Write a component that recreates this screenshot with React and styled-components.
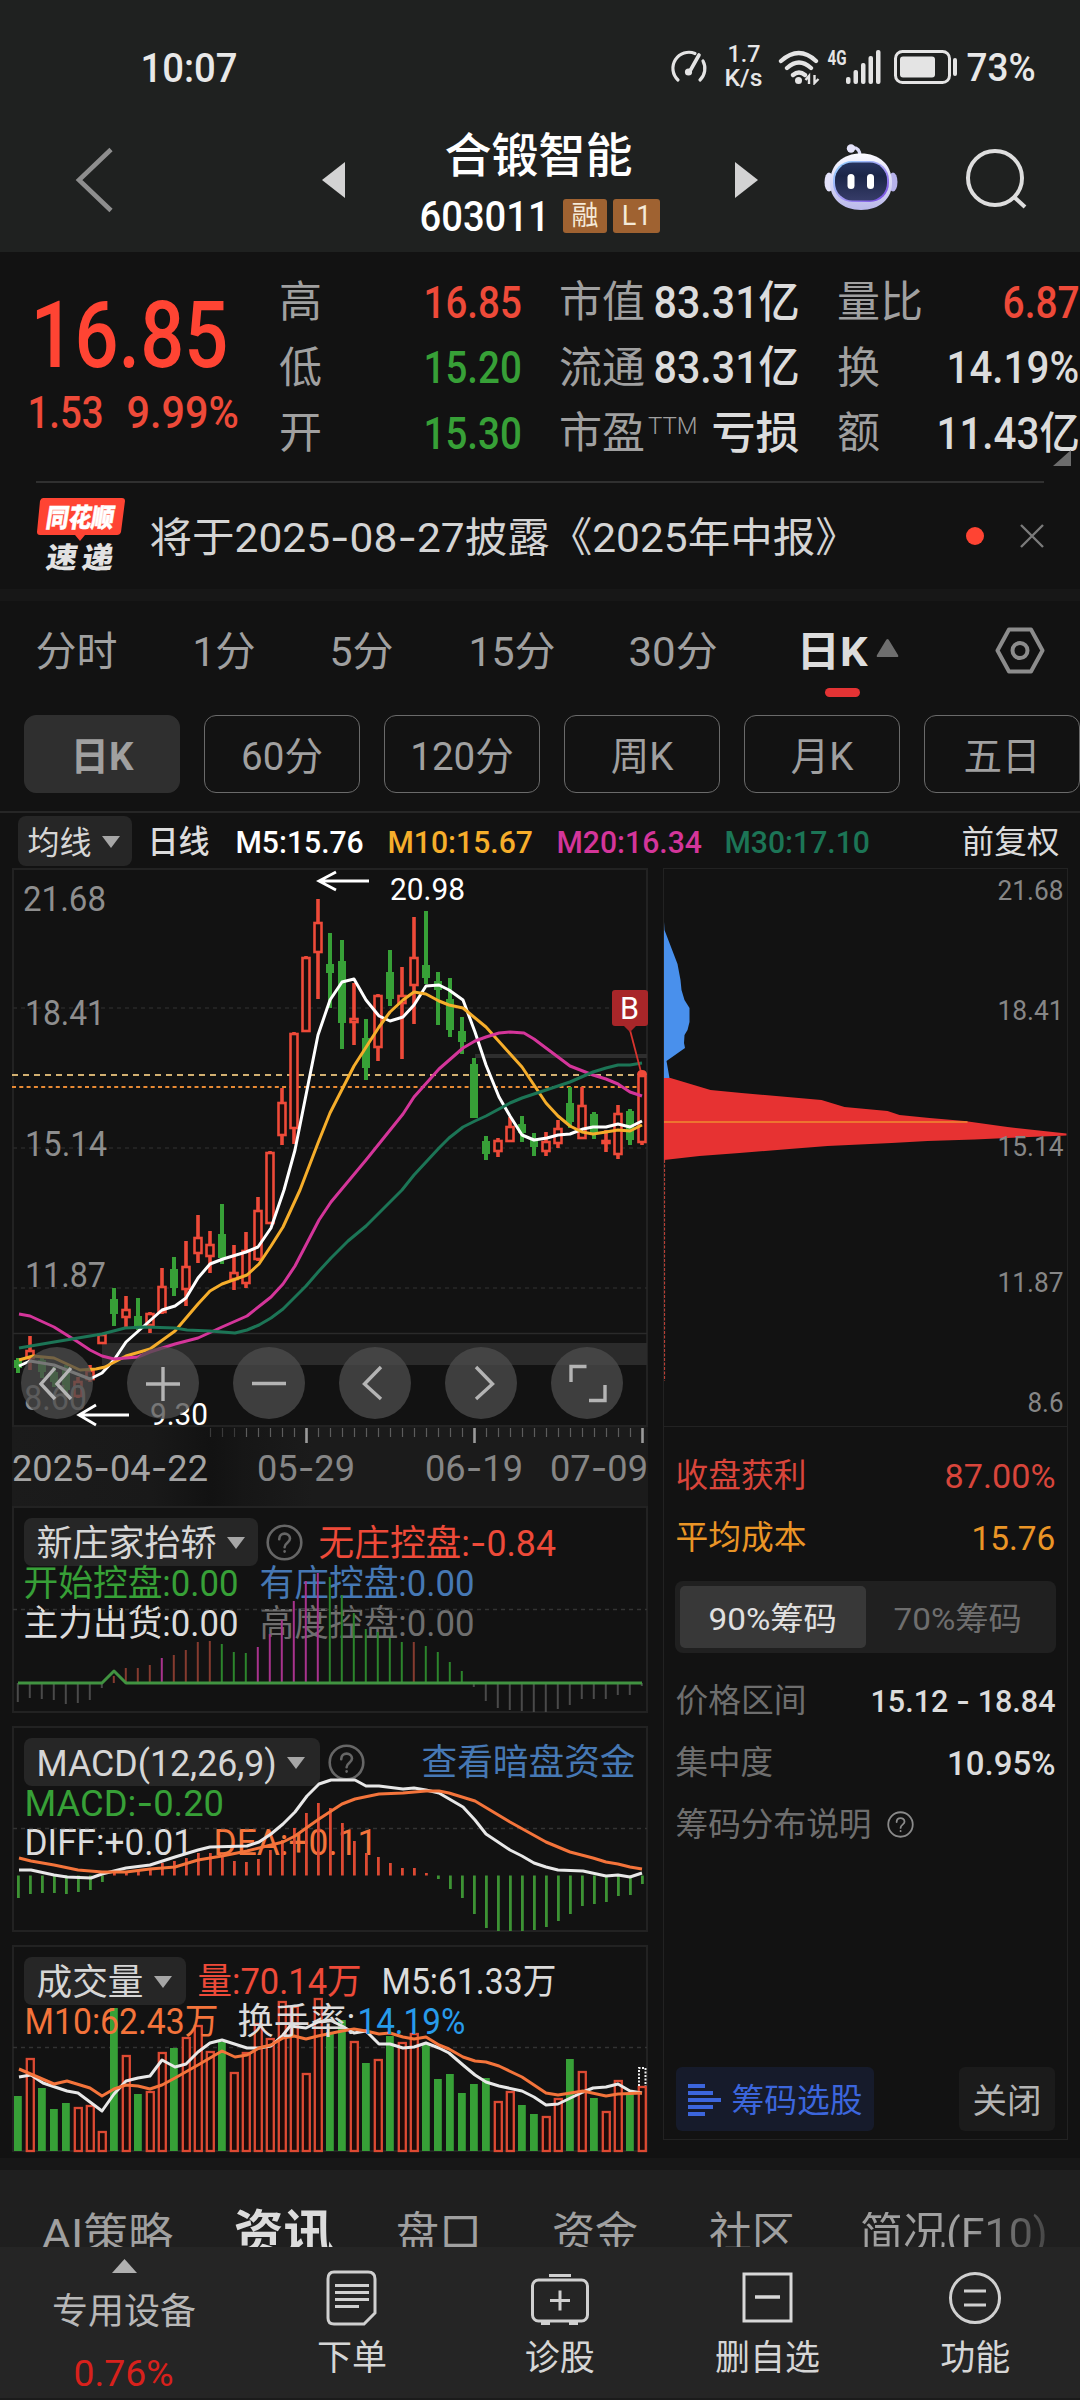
import React, { useLayoutEffect, useRef, useState } from "react";
import styled, { createGlobalStyle, css } from "styled-components";

const sans = `Roboto, "Noto Sans CJK SC", sans-serif`;
const c = {
  red: "#ee4a39", green: "#37a037", white: "#dcdcdc", grey: "#a0a0a0", dim: "#6e6e6e",
  orange: "#f4743b", amber: "#f6ae2b", pink: "#d4359a", teal: "#1c7556", blue: "#4678b4",
};

const Global = createGlobalStyle`
  * { box-sizing: border-box; }
  body { margin: 0; background: #121212; font-family: ${sans}; line-height: 1; color: ${c.white}; }
  svg { display: block; flex: none; }
`;

/* ---------- text fitted to a column width ---------- */
const FitBox = styled.span`
  display: inline-flex; flex: none; white-space: pre;
  justify-content: ${(p) => (p.$end ? "flex-end" : "flex-start")};
  width: ${(p) => p.$w}px;
  font-size: ${(p) => (p.$size ? p.$size + "px" : "inherit")};
  color: ${(p) => p.$color || "inherit"};
  font-weight: ${(p) => p.$weight || "inherit"};
`;
const FitInner = styled.span`
  display: inline-block; flex: none;
  transform-origin: ${(p) => (p.$end ? "right" : "left")} center;
`;
const Dash = styled.span`font-family: Inter, sans-serif;`;

function Fit({ w, size, color, weight, end, children }) {
  const ref = useRef(null);
  const [k, setK] = useState(1);
  useLayoutEffect(() => {
    if (ref.current) setK(w / ref.current.offsetWidth);
  }, [w, size, children]);
  const body = typeof children === "string"
    ? children.split(/(-)/).map((s, i) => (s === "-" ? <Dash key={i}>-</Dash> : s))
    : children;
  return (
    <FitBox $w={w} $size={size} $color={color} $weight={weight} $end={end}>
      <FitInner ref={ref} $end={end} style={{ transform: `translate(-0.5px, 1px) scaleX(${k})` }}>{body}</FitInner>
    </FitBox>
  );
}

/* ---------- page ---------- */
const Screen = styled.div`width: 1080px; height: 2400px; overflow: hidden; background: #121212; display: flex; flex-direction: column;`;
const Header = styled.header`height: 252px; flex: none; background: #1f2120;`;
const StatusBar = styled.div`height: 134px; display: flex; align-items: center; padding-left: 141px;`;
const StatusIcons = styled.div`margin-left: 432px; display: flex; align-items: center;`;
const Speed = styled.div`width: 38px; margin: 0 15px 0 17px; display: flex; flex-direction: column; gap: 0; font-size: 24px; align-items: center; font-weight: 500; color: #e6e6e6; padding-bottom: 4px;`;
const TitleBar = styled.div`height: 118px; display: flex; align-items: center;`;
const IconSlot = styled.div`width: ${(p) => p.$w}px; margin-left: ${(p) => p.$l || 0}px; padding-top: ${(p) => p.$t || 0}px; flex: none; align-self: flex-start;`;
const TitleBlock = styled.div`width: 240px; margin-left: 75px; align-self: flex-start; display: flex; flex-direction: column;`;
const StockName = styled.div`height: 46px; padding-left: 25px; font-size: 47px; font-weight: 500; color: #fff; margin-top: -3px;`;
const CodeRow = styled.div`display: flex; align-items: center; gap: 6px; margin-top: 21px; height: 36px; color: #fff;`;
const Tag = styled.span`width: ${(p) => p.$w}px; height: 34px; background: #9f6231; border-radius: 3px; display: flex; align-items: center; justify-content: center; font-size: 27px; color: #f5ead8; padding-top: 1px;`;

const Quote = styled.section`height: 229px; flex: none; display: flex; padding-top: 17px; position: relative;`;
const PriceBlock = styled.div`width: 279px; flex: none; padding: 20px 0 0 31px; color: #ff4433; display: flex; flex-direction: column; gap: 8px;`;
const Changes = styled.div`display: flex; gap: 23px; margin-left: -3px; font-size: 45px; color: ${c.red};`;
const StatCol = styled.div`width: ${(p) => p.$w}px; margin-right: 37px; flex: none; display: grid; grid-template-rows: repeat(3, 65.6px);`;
const Stat = styled.div`display: flex; align-items: center; justify-content: space-between; font-size: 44px; font-weight: 500; color: ${(p) => p.$color || c.white};`;
const StatLabel = styled.span`font-weight: 400; font-size: 43px; color: ${c.grey}; display: flex; padding-top: 2px;`;
const Sup = styled.sup`font-size: 24px; line-height: 1; margin-left: 3px; width: 44px; font-weight: 300; align-self: flex-start; padding-top: 2px;`;
const Corner = styled.i`position: absolute; right: 9px; bottom: 15px; border-left: 18px solid transparent; border-bottom: 16px solid #6c6c6c;`;

const News = styled.section`height: 108px; margin: 0 36px; flex: none; border-top: 2px solid #303030; display: flex; align-items: center; position: relative; padding-bottom: 1px;`;
const NewsText = styled.div`margin-left: 22px; font-size: 41px; flex: 1; padding-top: 3px; color: #d4d4d4;`;
const Dot = styled.i`width: 18px; height: 18px; border-radius: 50%; background: #ff4433; margin-right: 36px;`;
const Band = styled.div`height: ${(p) => p.$h}px; margin-top: ${(p) => p.$t || 0}px; background: #171717; flex: none;`;

const Periods = styled.nav`height: 114px; flex: none; display: flex; padding: 30px 0 0 36px; font-size: 41px; color: ${c.grey};`;
const Period = styled.div`height: 84px; width: ${(p) => p.$w}px; display: flex; ${(p) => p.$on && css`font-weight: 700; color: ${c.white};`}`;
const ActivePeriod = styled(Period)`flex-direction: column;`;
const PeriodLine = styled.div`display: flex; gap: 8px;`;
const Underline = styled.i`width: 35px; height: 9px; border-radius: 5px; background: #e33334; margin: 16px 0 0 28px;`;
const Gear = styled.svg`margin-top: -5px;`;
const Chips = styled.div`display: flex; gap: 24px; padding-left: 24px; height: 96px; flex: none;`;
const Chip = styled.div`
  width: 156px; height: 78px; flex: none; border-radius: 12px; border: 1px solid ${(p) => (p.$on ? "#2f2f2f" : "#6a6a6a")};
  background: ${(p) => (p.$on ? "#2f2f2f" : "transparent")}; display: flex; align-items: center; justify-content: center;
  font-size: 38.5px; color: ${c.grey}; font-weight: ${(p) => (p.$on ? 700 : 400)}; padding-top: 6px;
`;
const MaRow = styled.div`height: 57px; flex: none; border-top: 2px solid #262626; display: flex; align-items: center; padding-left: 18px; font-size: 32px; font-weight: 500;`;
const Picker = styled.div`
  height: ${(p) => p.$h || 48}px; width: ${(p) => p.$w}px; flex: none; background: #262626; border-radius: 8px; display: flex; align-items: center;
  padding-left: ${(p) => p.$pl || 13}px; gap: 10px; font-weight: 400; color: #d6d6d6; padding-top: 2px;
`;
const Sp = styled.span`width: ${(p) => p.$w}px; flex: none;`;

const Main = styled.main`display: flex; gap: 15px; padding-left: 12px; height: 1289px; flex: none;`;
const Left = styled.div`width: 636px; flex: none;`;
const Panel = styled.section`
  position: relative; height: ${(p) => p.$h}px; margin-top: ${(p) => p.$t || 0}px; border: 2px solid #222; padding: 10px 0 0 10px; font-size: 36px; font-weight: 400;
`;
const Layer = styled.svg`position: absolute; left: -2px; top: -2px; overflow: visible; pointer-events: none;`;
const LegendRow = styled.div`display: flex; align-items: center; position: relative; height: ${(p) => p.$h || 40}px; margin-top: ${(p) => p.$t || 0}px; padding-left: ${(p) => p.$pl || 0}px;`;
const Tools = styled.div`position: absolute; left: 7px; bottom: 6px; display: flex; gap: 34px;`;
const Tool = styled.button`width: 72px; height: 72px; border: 0; padding: 0; border-radius: 50%; background: rgba(76, 76, 76, 0.76);`;
const DateAxis = styled.div`position: relative; height: 79px; background: linear-gradient(90deg, #1b1b1b 0, #191919 140px, #121212 200px, #161616 230px, #1b1b1b 300px);`;

const SidePanel = styled.aside`width: 405px; height: 1272px; border: 1.5px solid #222; display: flex; flex-direction: column;`;
const Dist = styled.div`height: 558px; flex: none; border-bottom: 1.5px solid #222; margin-bottom: 17px;`;
const InfoRow = styled.div`
  height: 62px; display: flex; align-items: center; gap: 15px; padding: 0 11px 0 12px; font-size: 32.5px;
  justify-content: ${(p) => (p.$start ? "flex-start" : "space-between")}; color: ${(p) => p.$color || c.dim};
`;
const Segment = styled.div`display: flex; height: 72px; margin: 13px 11px 16px 11px; background: #202020; border-radius: 8px; padding: 5px; font-size: 32px;`;
const Seg = styled.div`flex: 1; border-radius: 5px; display: flex; align-items: center; justify-content: center; background: ${(p) => (p.$on ? "#383838" : "transparent")}; color: ${(p) => (p.$on ? "#e0e0e0" : c.dim)}; padding-top: 2px;`;
const Actions = styled.div`margin-top: auto; display: flex; justify-content: space-between; padding: 0 12px 8px 12px;`;
const Action = styled.div`height: 64px; width: ${(p) => p.$w}px; border-radius: 6px; display: flex; align-items: center; justify-content: center; gap: 11px; background: ${(p) => (p.$blue ? "#161b2b" : "#1b1b1b")}; color: ${(p) => (p.$blue ? "#3c66dd" : "#b4b4b4")}; font-size: ${(p) => (p.$blue ? 32.5 : 34)}px; padding-top: 2px;`;

const Tabs = styled.nav`height: 77px; flex: none; background: #1f1f1f; display: flex; overflow: hidden; padding: 42px 0 0 42px; font-size: 43px; color: ${c.grey};`;
const TabItem = styled.div`width: ${(p) => p.$w}px; flex: none; white-space: nowrap; ${(p) => p.$on && css`font-size: 49px; font-weight: 700; color: ${c.white}; margin-top: -4px;`}
  ${(p) => p.$fade && css`height: 60px; background: linear-gradient(90deg, #a0a0a0 55%, #3a3a3a 100%); background-clip: text; color: transparent;`}`;
const BottomNav = styled.footer`flex: 1; background: #252525; display: flex; border-bottom: 2px solid #1b1b1b;`;
const Sector = styled.div`width: 248px; display: flex; flex-direction: column; align-items: center; padding-top: 12px; font-size: 36px; color: #b8b8b8;`;
const SectorName = styled.div`margin-top: 21px;`;
const Pct = styled.div`margin-top: 24px;`;
const NavItem = styled.div`width: 207.8px; display: flex; flex-direction: column; align-items: center; font-size: 35px; color: #d6d6d6; padding-top: 20px; gap: 12px;`;

/* ---------- small drawings ---------- */
const Caret = ({ w = 18, h = 12, up, fill = "#a6a6a6" }) => (
  <svg width={w} height={h} viewBox="0 0 18 12" preserveAspectRatio="none"><path d={up ? "M0 12H18L9 0Z" : "M0 0H18L9 12Z"} fill={fill} /></svg>
);
const TriUp = () => <svg width="23" height="28" viewBox="0 0 23 28"><path d="M11.5 8Q12.5 8 13.5 10L22 24Q23 26 21 26H2Q0 26 1 24L9.500 10Q10.500 8 11.500 8Z" fill="#6e6e6e" /></svg>;
const Help = ({ r = 17, color = "#666", sw = 2.4 }) => (
  <svg width={r * 2 + 3} height={r * 2 + 3} viewBox="0 0 37 37" fill="none" stroke={color} strokeWidth={(sw * 18.5) / r} strokeLinecap="round">
    <circle cx="18.5" cy="18.5" r="16.8" />
    <path d="M13.2 15.2c0-7.6 10.8-7 10.8-.6 0 4-5.4 4.2-5.4 8.6" /><path d="M18.6 27.2v.4" />
  </svg>
);
const Robot = () => (
  <svg width="74" height="70" viewBox="0 0 74 70">
    <defs>
      <linearGradient id="head" x1="0" y1="0" x2="0" y2="1"><stop offset="0" stopColor="#fafaff" /><stop offset="1" stopColor="#b9b8ea" /></linearGradient>
      <linearGradient id="rim" x1="0" y1="0" x2="1" y2="1"><stop offset="0" stopColor="#8fd4ff" /><stop offset=".5" stopColor="#a6a0f5" /><stop offset="1" stopColor="#7040e0" /></linearGradient>
      <linearGradient id="face" x1="0" y1="0" x2="0" y2="1"><stop offset="0" stopColor="#26335e" /><stop offset=".35" stopColor="#1b2547" /><stop offset="1" stopColor="#363c68" /></linearGradient>
    </defs>
    <path d="M36 13Q36 5 29 4.500" fill="none" stroke="#dcdcf8" strokeWidth="3.2" />
    <circle cx="27" cy="5.500" r="4.200" fill="#e4e3fa" />
    <ellipse cx="5" cy="39" rx="4.500" ry="9.500" fill="#e3e2fa" /><ellipse cx="69" cy="39" rx="4.500" ry="9.500" fill="#b6b2ea" />
    <path d="M37 10.500C55 10.500 67 21 68 38C69 56 55 67 37 67C19 67 5 56 6 38C7 21 19 10.500 37 10.500Z" fill="url(#head)" />
    <rect x="9" y="18" width="56" height="41" rx="19" fill="url(#rim)" />
    <rect x="11" y="19.500" width="52" height="38" rx="17.500" fill="url(#face)" />
    <rect x="23.500" y="31" width="7" height="15" rx="3.500" fill="#fff" /><rect x="43" y="31" width="7" height="15" rx="3.500" fill="#fff" />
  </svg>
);
const FlashLogo = () => (
  <svg width="92" height="76" viewBox="0 0 92 76">
    <path d="M7 0H86Q89 0 89 3L85 34Q84 37 81 37H49L44 43L39 37H4Q1 37 1 34L4 3Q5 0 7 0Z" fill="#ff4433" />
    <g fontFamily={sans} fontWeight="900" fontSize="29">
      <text transform="translate(9 29) skewX(-9)" fill="#fff" fontSize="26" textLength="68" lengthAdjust="spacingAndGlyphs" stroke="#fff" strokeWidth=".5">同花顺</text>
      <text transform="translate(9 70) skewX(-9)" fill="#e2e2e2" textLength="31" lengthAdjust="spacingAndGlyphs">速</text>
      <text transform="translate(45 70) skewX(-9)" fill="#e2e2e2" textLength="31" lengthAdjust="spacingAndGlyphs">递</text>
    </g>
  </svg>
);

/* ---------- market data, in chart pixels ---------- */
const X = (i) => 17.8 + 12 * i;
const candles = [
  ["g",1358,1360,1368,1373],["r",1336,1350,1358,1370],["g",1358,1360,1372,1378],["g",1367,1372,1382,1387],["g",1365,1367,1390,1395],
  ["r",1377,1381,1396,1398],["r",1365,1370,1379,1382],["r",1333,1334,1343,1344],["g",1288,1299,1314,1326],["r",1296,1309,1317,1327],
  ["g",1298,1316,1329,1330],["r",1312,1313,1325,1333],["r",1268,1286,1312,1314],["g",1257,1269,1288,1296],["r",1241,1266,1289,1306],
  ["r",1215,1237,1253,1263],["r",1231,1244,1256,1273],["g",1204,1234,1258,1264],["r",1245,1272,1279,1290],["r",1232,1250,1283,1288],
  ["r",1197,1210,1259,1261],["r",1151,1152,1223,1223],["r",1088,1102,1135,1145],["r",1032,1033,1128,1144],["r",956,957,1031,1031],
  ["r",899,922,952,999],["g",933,964,973,1008],["g",940,961,1023,1049],["r",983,1018,1022,1045],["g",1019,1038,1068,1080],
  ["r",994,995,1047,1061],["g",950,972,999,1006],["r",967,995,1003,1059],["r",917,957,985,1024],["g",911,965,978,984],
  ["g",972,981,990,1025],["g",978,999,1030,1037],["g",1017,1031,1042,1054],["g",1058,1064,1118,1118],["g",1136,1141,1154,1160],
  ["r",1138,1140,1151,1157],["r",1117,1126,1141,1142],["g",1116,1124,1133,1142],["g",1133,1140,1147,1156],["r",1132,1141,1151,1156],
  ["r",1120,1128,1143,1148],["g",1087,1103,1122,1128],["r",1087,1105,1138,1138],["g",1112,1114,1133,1139],["r",1130,1140,1142,1152],
  ["r",1105,1113,1154,1159],["g",1109,1111,1140,1145],["r",1072,1075,1142,1145],
];
const ma5 = "19,1366 30,1361 54,1365 90,1379 102,1373 114,1360 126,1342 162,1310 175,1306 186,1298 198,1278 210,1264 223,1259 246,1252 258,1247 271,1228 284,1190 295,1150 318,1035 330,1000 342,982 354,979 366,1000 379,1016 390,1021 403,1017 414,1005 426,986 439,985 449,990 463,1000 475,1032 486,1065 499,1097 510,1116 522,1135 534,1140 547,1138 558,1135 570,1134 583,1129 593,1127 606,1127 618,1124 630,1127 642,1121";
const ma10 = "19,1360 33,1356 54,1358 80,1370 96,1369 105,1367 126,1356 150,1349 175,1331 198,1304 210,1291 222,1284 247,1275 259,1264 271,1246 283,1227 300,1190 318,1143 330,1113 354,1066 379,1027 390,1012 403,1000 414,992 426,994 439,1001 449,1005 463,1008 486,1027 522,1067 546,1103 558,1116 570,1126 582,1132 593,1134 606,1132 618,1130 630,1131 642,1125";
const ma20 = "19,1314 30,1316 54,1327 78,1342 90,1350 102,1356 114,1359 138,1357 150,1352 175,1344 198,1338 222,1327 247,1316 271,1297 283,1284 295,1266 307,1243 319,1220 331,1202 341,1190 366,1160 403,1114 414,1097 439,1069 463,1048 475,1041 486,1037 499,1033 510,1032 524,1033 534,1039 546,1048 558,1057 570,1066 593,1075 606,1079 618,1084 630,1092 642,1096";
const ma30 = "19,1348 60,1341 102,1334 125,1328 145,1327 175,1328 187,1330 210,1331 235,1333 247,1330 259,1325 271,1318 283,1309 306,1286 319,1271 331,1258 348,1241 366,1226 402,1190 414,1175 439,1148 449,1138 463,1127 475,1121 486,1116 510,1103 522,1098 570,1082 593,1072 606,1068 618,1065 630,1065 642,1063";
const control = [
  ["n",1702],["n",1698],["n",1699],["n",1700],["n",1704],["n",1703],["n",1700],["n",1688],["r",1676],["r",1668],["r",1668],["r",1665],["m",1658],
  ["r",1655],["r",1650],["r",1642],["r",1641],["g",1644],["g",1652],["g",1653],["m",1647],["m",1634],["m",1620],["m",1601],["m",1581],["m",1573],
  ["g",1577],["g",1595],["g",1613],["g",1629],["g",1632],["g",1638],["g",1642],["r",1642],["g",1646],["g",1652],["g",1662],["g",1671],["n",1687],
  ["n",1701],["n",1708],["n",1710],["n",1711],["n",1712],["n",1712],["n",1709],["n",1705],["n",1699],["n",1699],["n",1699],["n",1695],["n",1695],["n",1686],
];
const controlColor = { n: "#4a4a4a", r: "#853b2f", m: "#a8338d", g: "#2c852c" };
const macd = [1898,1894,1893,1893,1894,1892,1890,1882,1873,1872,1870,1868,1863,1861,1858,1853,1853,1854,1861,1862,1859,1850,1840,1828,1813,1803,1808,1823,1841,1853,1857,1863,1868,1868,1873,1879,1889,1898,1914,1928,1931,1931,1931,1930,1927,1921,1914,1906,1904,1902,1896,1895,1884];
const diff = "19,1870 31,1870 54,1875 67,1877 91,1878 102,1874 126,1868 150,1865 175,1857 198,1850 210,1847 247,1846 259,1842 271,1834 283,1824 295,1812 307,1796 319,1784 331,1780 355,1780 366,1786 379,1786 403,1789 414,1788 426,1790 439,1793 463,1807 475,1820 486,1834 510,1850 522,1856 534,1863 546,1867 558,1870 583,1871 606,1876 618,1875 630,1877 642,1873";
const dea = "19,1858 31,1861 54,1865 78,1870 102,1872 126,1872 150,1869 175,1867 198,1860 222,1856 247,1851 271,1845 283,1842 295,1836 319,1819 342,1804 355,1799 379,1794 403,1793 426,1791 439,1791 449,1793 475,1801 510,1822 546,1842 570,1852 593,1858 606,1862 618,1864 630,1867 642,1869";
const volume = [2096,2058,2088,2109,2103,2107,2105,2131,2008,2055,2094,2091,2052,2048,2037,2025,2051,2042,2072,2052,2023,2038,2001,2006,2073,1998,2032,2020,2041,2063,2059,2036,2042,2033,2044,2079,2074,2093,2084,2078,2101,2091,2105,2114,2116,2098,2059,2071,2098,2111,2080,2094,2086];
const volUp = "grgggrrrgrgrrgrrrgrrrrrrrrggrgrgrrggggggrrggrrgrgrrgr";
const vol5 = "19,2077 31,2075 43,2083 67,2091 78,2093 90,2102 102,2111 114,2094 126,2081 138,2078 150,2076 162,2060 175,2067 186,2064 198,2052 210,2043 222,2040 247,2048 259,2048 271,2046 283,2035 290,2026 306,2028 318,2022 330,2020 342,2026 354,2033 366,2031 379,2044 390,2044 403,2048 414,2047 426,2043 439,2048 449,2053 463,2065 475,2075 486,2082 499,2086 522,2091 534,2097 546,2105 558,2104 583,2092 593,2088 606,2087 618,2084 630,2091 642,2093";
const vol10 = "19,2069 54,2084 67,2081 90,2088 102,2096 114,2089 126,2085 138,2086 150,2089 162,2085 175,2078 198,2065 210,2058 222,2051 235,2057 247,2055 259,2048 271,2045 283,2038 294,2036 306,2039 318,2036 342,2031 354,2029 366,2031 379,2034 390,2033 403,2037 414,2039 426,2037 439,2045 449,2049 463,2057 475,2061 486,2062 499,2066 522,2077 546,2093 558,2095 583,2091 606,2096 618,2094 642,2093";

const Line = ({ pts, color, w = 3 }) => <polyline points={pts} fill="none" stroke={color} strokeWidth={w} strokeLinejoin="round" />;
const GridLine = ({ y, dash = "4 4", color = "#292929" }) => <path d={`M13 ${y}H647`} stroke={color} strokeWidth="1.5" strokeDasharray={dash} />;
const Label = ({ x, y, w, children, size = 35, fill = "#8e8e8e", weight = 400 }) => (
  <text x={x} y={y} fontFamily={sans} fontSize={size} fontWeight={weight} fill={fill} textLength={w} lengthAdjust="spacingAndGlyphs">
    {children.split(/(-)/).map((s, i) => (s === "-" ? <tspan key={i} fontFamily="Inter, sans-serif">-</tspan> : s))}
  </text>
);

function CandleChart() {
  return (
    <Layer width="636" height="559" viewBox="12 868 636 559">
      <GridLine y={1008} /><GridLine y={1148} /><GridLine y={1288} />
      <path d="M13 1333.5H647" stroke="#2a2a2a" strokeWidth="1.3" />
      <rect x="102" y="1343" width="545" height="22" fill="#2b2b2b" />
      <path d="M475 1056H647" stroke="#2e2e2e" strokeWidth="4" />
      <path d="M12 1075H647" stroke="#d2b071" strokeWidth="2" strokeDasharray="6 5" />
      <path d="M12 1087H647" stroke="#e88a34" strokeWidth="2" strokeDasharray="4 3.3" />
      {candles.map(([t, h, a, b, l], i) => {
        const x = X(i) + 0.2;
        return t === "g" ? (
          <g key={i} fill={c.green}><rect x={x - 2} y={h} width="4" height={l - h} /><rect x={x - 4} y={a} width="8" height={b - a} /></g>
        ) : (
          <g key={i}>
            <path d={`M${x} ${h}V${a}M${x} ${b}V${l}`} stroke={c.red} strokeWidth="3.6" />
            <rect x={x - 3.500} y={a + 1} width="7" height={Math.max(2, b - a - 1)} fill="#1a0d0c" stroke={c.red} strokeWidth="2.6" />
          </g>
        );
      })}
      <Line pts={ma5} color="#fff" /><Line pts={ma10} color={c.amber} /><Line pts={ma20} color={c.pink} /><Line pts={ma30} color={c.teal} />
      <Label x={23} y={911} w={83}>21.68</Label><Label x={25} y={1025} w={80}>18.41</Label>
      <Label x={25} y={1156} w={82}>15.14</Label><Label x={25} y={1287} w={81}>11.87</Label><Label x={24} y={1410} w={63}>8.60</Label>
      <g stroke="#fff" strokeWidth="2.8" fill="none">
        <path d="M369 881H319M336 872L319 881L336 890" /><path d="M129 1415H79M96 1405L79 1415L96 1425" />
      </g>
      <Label x={390} y={900} w={75} size={32} fill="#fff">20.98</Label>
      <Label x={150} y={1425} w={58} size={32} fill="#fff">9.30</Label>
      <path d="M630 1030L641 1072" stroke="#d8342e" strokeWidth="1.8" />
      <path d="M637 1075q0-5 5-5t5 5z" fill={c.red} />
      <path d="M615 990H645Q648 990 648 993V1023Q648 1026 645 1026H636L630 1032L624 1026H615Q612 1026 612 1023V993Q612 990 615 990Z" fill="#a82629" />
      <Label x={620} y={1019} w={19} size={31} fill="#fff">B</Label>
    </Layer>
  );
}

const toolIcons = [
  "M34 21L20 37L34 52M50 21L36 37L50 52", "M36 20V54M19 37H53", "M19 36.5H53", "M42 20L25.5 37L42 52", "M31 20L47.5 37L31 52",
  "M20 35V19.5H35.5M54 38V53.5H38",
];

function DistChart() {
  const ys = [[890, "21.68"], [1010, "18.41"], [1146, "15.14"], [1282, "11.87"], [1402, "8.6"]];
  return (
    <svg width="405" height="557" viewBox="664.5 869 405 557">
      <path d="M664 914L665 930L678 964L681 980L682 990L685 1000L690 1008L690 1022L688 1030L685 1035L684.500 1043L685.500 1048L667 1061L670 1078H664Z" fill="#4990ec" />
      <path d="M664 1078H671L711 1090L742 1093L822 1100L845 1107L888 1111L900 1115L930 1118L965 1121L1008 1127L1067 1133.500V1135.500L1030 1137L975 1139.500L928 1141L892 1143L828 1146L790 1149L740 1153L700 1156L664 1160Z" fill="#e73232" />
      <path d="M664 1122H968" stroke="#f08a30" strokeWidth="1.500" />
      <path d="M665 1160V1381" stroke="#b83f35" strokeWidth="1.200" strokeDasharray="3 1.500" />
      {ys.map(([y, t]) => <Label key={t} x={t === "8.6" ? 1028 : 998} y={y + 10} w={t === "8.6" ? 36 : 66} size={28} fill="#868686">{t}</Label>)}
    </svg>
  );
}

export default function App() {
  return (
    <Screen>
      <Global />
      <Header>
        <StatusBar>
          <Fit w={97} size={41} color="#e8e8e8" weight={500}>10:07</Fit>
          <StatusIcons>
            <svg width="38" height="36" viewBox="0 0 38 36" fill="none" stroke="#e4e4e4" strokeWidth="3.200" strokeLinecap="round">
              <path d="M8 31A16 16 0 0 1 25 4.500M33 12A16 16 0 0 1 30 31" /><path d="M29 6L20 22" strokeWidth="3.600" /><circle cx="18.500" cy="23" r="3.600" fill="#e4e4e4" stroke="none" />
            </svg>
            <Speed><Fit w={33}>1.7</Fit><Fit w={38}>K/s</Fit></Speed>
            <svg width="104" height="36" viewBox="779 47 104 36" fill="none" stroke="#e4e4e4">
              <g strokeWidth="4.300" strokeLinecap="round"><path d="M782 59Q800 43 817 59M788 66Q800 55 812 66M794 73Q800 68 806 73" /></g>
              <circle cx="799.500" cy="78.500" r="3.500" fill="#e4e4e4" stroke="none" />
              <path d="M810 82V74L806.500 78M815.500 73V81L819.500 77" strokeWidth="2.400" />
              <g fill="#e4e4e4" stroke="none">
                <rect x="847" y="75" width="4.500" height="7" rx="2" /><rect x="854.500" y="68" width="4.500" height="14" rx="2" /><rect x="862" y="61" width="4.500" height="21" rx="2" /><rect x="869.500" y="54" width="4.500" height="28" rx="2" /><rect x="877" y="48" width="4.500" height="34" rx="2" />
                <text x="828.500" y="63" fontFamily={sans} fontWeight="700" fontSize="21" textLength="19" lengthAdjust="spacingAndGlyphs">4G</text>
              </g>
            </svg>
            <Sp $w={12} />
            <svg width="65" height="34" viewBox="0 0 65 34"><rect x="1.500" y="1.500" width="54" height="31" rx="7" fill="none" stroke="#e4e4e4" strokeWidth="3" /><rect x="6" y="6.500" width="35" height="21" rx="3" fill="#e4e4e4" /><rect x="59" y="8" width="4" height="18" rx="2" fill="#e4e4e4" /></svg>
            <Sp $w={8} />
            <Fit w={69} size={38} color="#e8e8e8" weight={500}>73%</Fit>
          </StatusIcons>
        </StatusBar>
        <TitleBar>
          <IconSlot $w={38} $l={75} $t={13}><svg width="38" height="66" viewBox="0 0 38 66"><path d="M36 2.500L4 33L36 63.500" fill="none" stroke="#8e8e8e" strokeWidth="4.600" /></svg></IconSlot>
          <IconSlot $w={24} $l={208} $t={28}><svg width="24" height="36" viewBox="0 0 24 36"><path d="M24 0V36L1 18Z" fill="#d3d3d3" /></svg></IconSlot>
          <TitleBlock>
            <StockName><Fit w={188}>合锻智能</Fit></StockName>
            <CodeRow><Fit w={130} size={42} weight={500}>603011</Fit><Sp $w={1} /><Tag $w={45}>融</Tag><Tag $w={48}>L1</Tag></CodeRow>
          </TitleBlock>
          <IconSlot $w={24} $l={75} $t={28}><svg width="24" height="36" viewBox="0 0 24 36"><path d="M0 0V36L23 18Z" fill="#d3d3d3" /></svg></IconSlot>
          <IconSlot $w={74} $l={65} $t={9}><Robot /></IconSlot>
          <IconSlot $w={64} $l={67} $t={12}><svg width="64" height="64" viewBox="0 0 64 64" fill="none" stroke="#dedede" strokeWidth="4"><circle cx="30" cy="32" r="27" /><path d="M49 51L60 61" /></svg></IconSlot>
        </TitleBar>
      </Header>

      <Quote>
        <PriceBlock>
          <Fit w={198} size={92} weight={500}>16.85</Fit>
          <Changes><Fit w={76} weight={500}>1.53</Fit><Fit w={112} weight={500}>9.99%</Fit></Changes>
        </PriceBlock>
        <StatCol $w={243}>
          <Stat $color={c.red}><StatLabel>高</StatLabel><Fit w={98} end>16.85</Fit></Stat>
          <Stat $color={c.green}><StatLabel>低</StatLabel><Fit w={98} end>15.20</Fit></Stat>
          <Stat $color={c.green}><StatLabel>开</StatLabel><Fit w={98} end>15.30</Fit></Stat>
        </StatCol>
        <StatCol $w={241}>
          <Stat><StatLabel>市值</StatLabel><Fit w={146} end>83.31亿</Fit></Stat>
          <Stat><StatLabel>流通</StatLabel><Fit w={146} end>83.31亿</Fit></Stat>
          <Stat><StatLabel>市盈<Sup>TTM</Sup></StatLabel><Fit w={88} end>亏损</Fit></Stat>
        </StatCol>
        <StatCol $w={243}>
          <Stat $color={c.red}><StatLabel>量比</StatLabel><Fit w={77} end>6.87</Fit></Stat>
          <Stat><StatLabel>换</StatLabel><Fit w={133} end>14.19%</Fit></Stat>
          <Stat><StatLabel>额</StatLabel><Fit w={143} end>11.43亿</Fit></Stat>
        </StatCol>
        <Corner />
      </Quote>

      <News>
        <FlashLogo />
        <NewsText><Fit w={708}>将于2025-08-27披露《2025年中报》</Fit></NewsText>
        <Dot />
        <svg width="24" height="24" viewBox="0 0 24 24"><path d="M1 1L23 23M23 1L1 23" stroke="#7a7a7a" strokeWidth="2.400" /></svg>
      </News>
      <Band $h={12} />

      <Periods>
        <Period $w={157}><Fit w={82}>分时</Fit></Period>
        <Period $w={137}><Fit w={63}>1分</Fit></Period>
        <Period $w={139}><Fit w={64}>5分</Fit></Period>
        <Period $w={160}><Fit w={87}>15分</Fit></Period>
        <Period $w={168}><Fit w={89}>30分</Fit></Period>
        <ActivePeriod $w={198} $on>
          <PeriodLine><Fit w={71}>日K</Fit><TriUp /></PeriodLine>
          <Underline />
        </ActivePeriod>
        <Gear width="50" height="48" viewBox="0 0 50 48" fill="none" stroke="#8c8c8c" strokeWidth="4" strokeLinejoin="round"><path d="M14 3.500H36L47.500 24.500L36 45.500H14L2.500 24.500Z" /><circle cx="25" cy="24.500" r="7.500" /></Gear>
      </Periods>
      <Chips>
        {["日K", "60分", "120分", "周K", "月K", "五日"].map((t, i) => <Chip key={t} $on={i === 0}>{t}</Chip>)}
      </Chips>

      <MaRow>
        <Picker $w={114} $h={50} $pl={10}><Fit w={64}>均线</Fit><Caret /></Picker>
        <Sp $w={16} /><Fit w={62}>日线</Fit>
        <Sp $w={26} /><Fit w={128} color="#fff">M5:15.76</Fit>
        <Sp $w={24} /><Fit w={145} color={c.amber}>M10:15.67</Fit>
        <Sp $w={24} /><Fit w={145} color={c.pink}>M20:16.34</Fit>
        <Sp $w={23} /><Fit w={145} color={c.teal}>M30:17.10</Fit>
        <Sp $w={92} /><Fit w={98} weight={400}>前复权</Fit>
      </MaRow>

      <Main>
        <Left>
          <Panel $h={559}>
            <CandleChart />
            <Tools>
              {toolIcons.map((d) => (
                <Tool key={d}><svg width="72" height="72" viewBox="0 0 72 72"><path d={d} fill="none" stroke="#b4b4b4" strokeWidth="3.400" /></svg></Tool>
              ))}
            </Tools>
          </Panel>
          <DateAxis>
            <svg width="636" height="79" viewBox="12 1427 636 79">
              {Array.from({ length: 37 }, (_, k) => k + 16).map((i) => {
                const major = i === 24 || i === 38 || i === 52;
                return <path key={i} d={`M${X(i) + 0.7} 1428V${major ? 1443 : 1437}`} stroke={major ? "#9a9a9a" : i < 19 ? "#3a3a3a" : "#5c5c5c"} strokeWidth={major ? 2.6 : 1.2} />;
              })}
              <Label x={12} y={1481} w={196} fill="#a4a4a4" size={36}>2025-04-22</Label>
              <Label x={257} y={1481} w={98} size={36} fill="#868686">05-29</Label>
              <Label x={425} y={1481} w={98} size={36} fill="#868686">06-19</Label>
              <Label x={550} y={1481} w={98} size={36} fill="#868686">07-09</Label>
            </svg>
          </DateAxis>

          <Panel $h={207}>
            <LegendRow $h={48}>
              <Picker $w={234}><Fit w={180}>新庄家抬轿</Fit><Caret /></Picker>
              <Sp $w={8} /><Help /><Sp $w={16} /><Fit w={238} color={c.red}>无庄控盘:-0.84</Fit>
            </LegendRow>
            <LegendRow $t={-3}><Fit w={215} color={c.green}>开始控盘:0.00</Fit><Sp $w={21} /><Fit w={215} color={c.blue}>有庄控盘:0.00</Fit></LegendRow>
            <LegendRow><Fit w={215}>主力出货:0.00</Fit><Sp $w={21} /><Fit w={215} color={c.dim}>高度控盘:0.00</Fit></LegendRow>
            <Layer width="636" height="207" viewBox="12 1506 636 207">
              <GridLine y={1609.5} color="#333" />
              {control.map(([k, y], i) => <path key={i} d={`M${X(i)} 1683V${y}`} stroke={controlColor[k]} strokeWidth="2" />)}
              <Line pts="18,1683 102,1683 114,1671 126,1683 642,1683" color="#419441" />
            </Layer>
          </Panel>

          <Panel $h={206} $t={13}>
            <LegendRow $h={48}>
              <Picker $w={296}><Fit w={240}>MACD(12,26,9)</Fit><Caret /></Picker>
              <Sp $w={8} /><Help /><Sp $w={57} /><Fit w={214} color={c.blue}>查看暗盘资金</Fit>
            </LegendRow>
            <LegendRow $t={-4} $pl={1}><Fit w={200} color={c.green}>MACD:-0.20</Fit></LegendRow>
            <LegendRow $pl={1}><Fit w={169}>DIFF:+0.01</Fit><Sp $w={20} /><Fit w={164} color={c.orange}>DEA:+0.11</Fit></LegendRow>
            <Layer width="636" height="206" viewBox="12 1726 636 206">
              <GridLine y={1828.5} color="#333" />
              {macd.map((y, i) => <path key={i} d={`M${X(i) + 0.6} 1875.500V${y}`} stroke={y < 1875 ? "#dd4a33" : "#3d9334"} strokeWidth="2.800" />)}
              <Line pts={diff} color="#e8e8e8" /><Line pts={dea} color={c.orange} />
            </Layer>
          </Panel>

          <Panel $h={207} $t={13}>
            <Layer width="636" height="207" viewBox="12 1945 636 207">
              <GridLine y={2047.5} color="#333" />
              {volume.map((y, i) => volUp[i] === "g"
                ? <rect key={i} x={X(i) - 3.8} y={y} width="7.800" height={2151 - y} fill={c.green} />
                : <rect key={i} x={X(i) - 3} y={y + 1} width="7" height={2150 - y} fill="#1c0b09" stroke="#dd4a33" strokeWidth="2.300" />)}
              <path d="M639 2086V2068H645.500V2086" fill="none" stroke="#eee" strokeWidth="2" strokeDasharray="2 1.500" />
              <Line pts={vol5} color="#e8e8e8" /><Line pts={vol10} color={c.orange} />
            </Layer>
            <LegendRow $h={48}>
              <Picker $w={162}><Fit w={107}>成交量</Fit><Caret /></Picker>
              <Sp $w={12} /><Fit w={164} color={c.red}>量:70.14万</Fit><Sp $w={20} /><Fit w={175}>M5:61.33万</Fit>
            </LegendRow>
            <LegendRow $t={-4} $pl={1}><Fit w={194} color={c.orange}>M10:62.43万</Fit><Sp $w={19} /><Fit w={118}>换手率:</Fit><Sp $w={2} /><Fit w={108} color="#289bea">14.19%</Fit></LegendRow>
          </Panel>
        </Left>

        <SidePanel>
          <Dist><DistChart /></Dist>
          <InfoRow $color="#d8453b"><Fit w={131}>收盘获利</Fit><Fit w={111} end size={33}>87.00%</Fit></InfoRow>
          <InfoRow $color="#ea9526"><Fit w={131}>平均成本</Fit><Fit w={84} end size={33}>15.76</Fit></InfoRow>
          <Segment><Seg $on><Fit w={128}>90%筹码</Fit></Seg><Seg><Fit w={128}>70%筹码</Fit></Seg></Segment>
          <InfoRow><Fit w={131}>价格区间</Fit><Fit w={185} end size={32} color={c.white} weight={500}>15.12 - 18.84</Fit></InfoRow>
          <InfoRow><Fit w={98}>集中度</Fit><Fit w={109} end size={33} color={c.white} weight={500}>10.95%</Fit></InfoRow>
          <InfoRow $start><Fit w={196}>筹码分布说明</Fit><Help r={12} color="#8a8a8a" sw={1.6} /></InfoRow>
          <Actions>
            <Action $blue $w={198}>
              <svg width="33" height="34" viewBox="0 0 33 34" stroke="#3c66dd" strokeWidth="4"><path d="M0 3H17M0 10H25M0 17H33M0 24H25M0 31H17" /></svg>
              <Fit w={131}>筹码选股</Fit>
            </Action>
            <Action $w={96}><Fit w={69}>关闭</Fit></Action>
          </Actions>
        </SidePanel>
      </Main>

      <Band $h={12} $t={1} />
      <Tabs>
        <TabItem $w={192}><Fit w={132}>AI策略</Fit></TabItem>
        <TabItem $w={162} $on><Fit w={100}>资讯</Fit></TabItem>
        <TabItem $w={156}>盘口</TabItem>
        <TabItem $w={157}>资金</TabItem>
        <TabItem $w={151}>社区</TabItem>
        <TabItem $w={196} $fade>简况(F10)</TabItem>
      </Tabs>
      <BottomNav>
        <Sector><Caret up w={25} h={14} fill="#b0b0b0" /><SectorName>专用设备</SectorName><Pct><Fit w={100} size={37} color="#d8211c">0.76%</Fit></Pct></Sector>
        <NavItem><svg width="60" height="62" viewBox="0 0 60 62" fill="none" stroke="#d0d0d0" strokeWidth="3"><path d="M12 5H46Q53 5 53 12V46L42 57H12Q6 57 6 51V12Q6 5 12 5Z" /><path d="M13 18.500H47M13 25.500H47M13 32.500H47M13 39.500H37" /></svg>下单</NavItem>
        <NavItem><svg width="60" height="62" viewBox="0 0 60 62" fill="none" stroke="#d0d0d0" strokeWidth="3"><rect x="2.500" y="13" width="55" height="41" rx="6" /><path d="M19 8.500H41M30 23.500V43.500M20 33.500H40" /><path d="M11 56H20M39 56H48" strokeWidth="4" /></svg>诊股</NavItem>
        <NavItem><svg width="60" height="62" viewBox="0 0 60 62" fill="none" stroke="#d8d8d8" strokeWidth="3"><rect x="7" y="7" width="47" height="47" /><path d="M18 30H43" strokeWidth="3.500" /></svg>删自选</NavItem>
        <NavItem><svg width="60" height="62" viewBox="0 0 60 62" fill="none" stroke="#d0d0d0" strokeWidth="3"><circle cx="30" cy="31" r="24.500" /><path d="M19 24H41M19 38H41" /></svg>功能</NavItem>
      </BottomNav>
    </Screen>
  );
}
